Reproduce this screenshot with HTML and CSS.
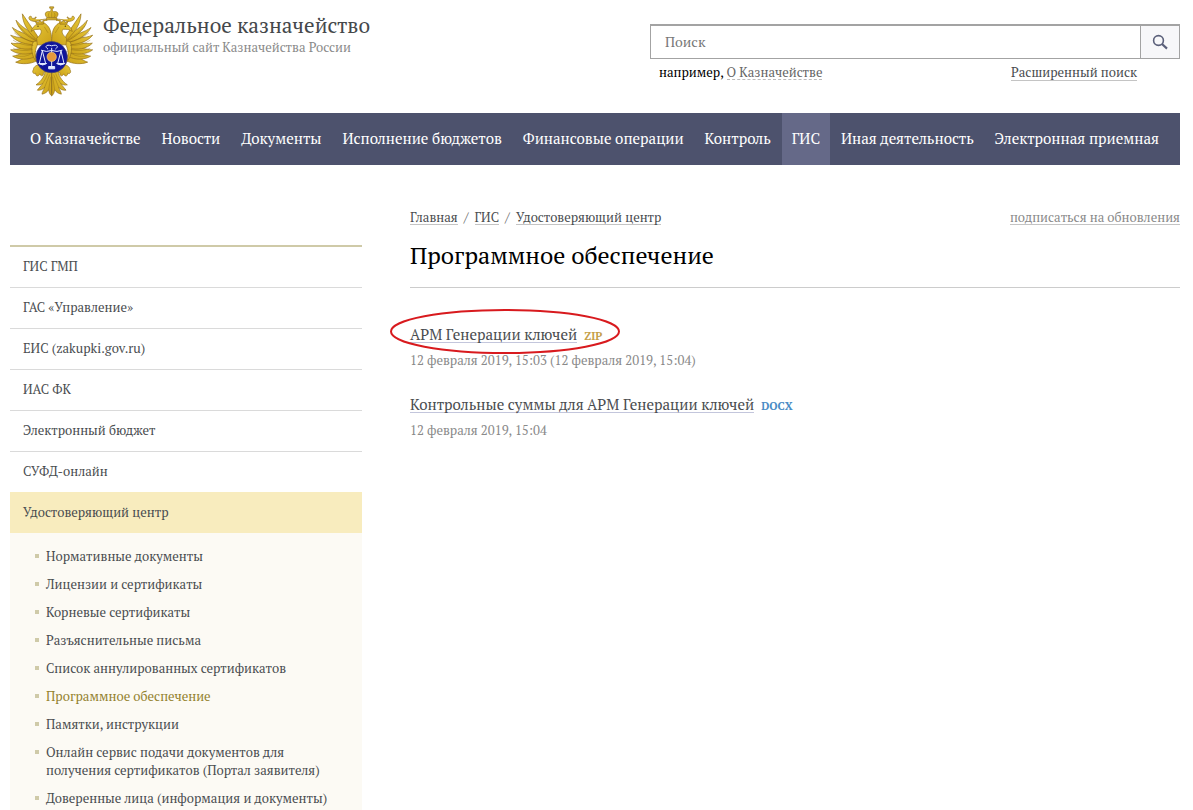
FILE: index.html
```html
<!DOCTYPE html>
<html lang="ru">
<head>
<meta charset="utf-8">
<meta name="viewport" content="width=device-width, initial-scale=1">
<title>Программное обеспечение — Федеральное казначейство</title>
<link rel="stylesheet" href="styles.css">
</head>
<body>
<div class="page">
  <header class="header">
    <div class="brand">
      <svg class="emblem" viewBox="30 18 252 272" aria-hidden="true">
        <defs>
          <linearGradient id="gold" x1="0" y1="0" x2="1" y2="1">
            <stop offset="0" stop-color="#e6c83a"/>
            <stop offset="1" stop-color="#cba016"/>
          </linearGradient>
          <g id="half" fill="url(#gold)" stroke="#94701a" stroke-width="2" stroke-linejoin="round">
            <path d="M110 182C92 192 65 193 47 186C64 180 78 170 93 152Z"/>
            <path d="M108 168C84 181 55 179 38 168C60 164 76 155 92 138Z"/>
            <path d="M106 155C82 166 49 163 32 149C55 149 72 141 92 126Z"/>
            <path d="M106 143C78 152 48 145 33 129C54 132 72 128 94 117Z"/>
            <path d="M108 134C80 134 48 126 32 105C58 115 74 113 98 111Z"/>
            <path d="M110 128C82 122 50 108 37 82C58 97 78 101 102 107Z"/>
            <path d="M112 124C84 110 56 91 48 60C66 82 84 90 106 104Z"/>
            <path d="M116 126C92 102 68 78 67 41C83 65 95 81 112 107Z"/>
            <path d="M119 122C107 142 101 157 110 186C96 170 91 144 100 124Z"/>
            <path d="M155 122C154 106 154 88 142 76C135 66 118 64 112 72C104 75 97 82 93 94C102 86 113 88 121 87C128 96 120 107 110 114L112 134H155Z"/>
            <path d="M110 72L106 64L115 67L119 60L124 66L132 64L130 72Z"/>
            <path d="M142 61C134 58 128 60 126 64M142 58C130 55 122 60 115 62C106 66 97 64 89 59C84 53 88 46 94 49C92 55 101 56 108 53C112 49 102 49 106 57"/>
            <path d="M123 195C112 192 100 199 100 209C95 216 101 223 107 219C106 229 117 230 119 221C123 231 132 227 130 218C138 216 138 206 131 204Z"/>
            <path d="M155 206H136C136 224 126 242 108 254C117 256 123 253 128 250C123 258 116 264 112 270C121 271 129 268 134 261C131 270 126 276 126 282C136 280 142 275 146 269C147 277 150 284 155 287Z"/>
          </g>
        </defs>
        <use href="#half"/>
        <use href="#half" transform="translate(310 0) scale(-1 1)"/>
        <path class="feather-lines" d="M56 77Q76 102 106 119M43 98Q69 119 102 126M39 120Q64 137 100 136M39 144Q66 156 98 148M47 166Q73 174 98 159M254 77Q234 102 204 119M267 98Q241 119 208 126M271 120Q246 137 210 136M271 144Q244 156 212 148M263 166Q237 174 212 159M133 80L144 98M177 80L166 98M143 220Q138 236 128 250M167 220Q172 236 182 250M149 223L134 261M161 223L176 261M152 230L146 269M158 230L164 269M155 220V280"/>
        <circle class="eye" cx="114" cy="78" r="2"/>
        <circle class="eye" cx="196" cy="78" r="2"/>
        <path class="crown" d="M142 53C130 42 137 31 150 35L153 30V24H149V20H161V24H157V30L160 35C173 31 180 42 168 53Z"/>
        <path class="crown" d="M139 53H171V59H139Z"/>
        <path class="feather-lines" d="M147 38Q142 45 148 52M155 34V52M163 38Q168 45 162 52"/>
        <circle class="shield" cx="155" cy="171" r="47"/>
        <g class="scales">
          <path d="M155 143V205M123 150Q139 157 155 151Q171 157 187 150M127 152L118 190M127 152L137 190M183 152L173 190M183 152L192 190M144 147C132 138 140 132 155 137C170 132 178 138 166 147"/>
          <path class="scale-fill" d="M116 190H140Q128 199 116 190ZM170 190H194Q182 199 170 190ZM146 199H164V206H146Z"/>
        </g>
        <circle class="coin" cx="155" cy="170" r="14"/>
      </svg>
      <div class="brand-text">
        <a class="brand-name" href="#">Федеральное казначейство</a>
        <span class="brand-note">официальный сайт Казначейства России</span>
      </div>
    </div>
    <form class="search">
      <div class="search-box">
        <input class="search-input" type="search" placeholder="Поиск" aria-label="Поиск">
        <button class="search-button" type="button" aria-label="Найти">
          <svg class="search-icon" viewBox="0 0 16 16" aria-hidden="true"><circle cx="6.5" cy="6.5" r="4.9"/><path class="handle" d="M10 10L15 14.6"/></svg>
        </button>
      </div>
      <div class="search-hints">
        <span>например, <a class="hint-link" href="#">О Казначействе</a></span>
        <a class="advanced-link" href="#">Расширенный поиск</a>
      </div>
    </form>
  </header>
  <nav class="nav" aria-label="Основное меню">
    <a href="#">О Казначействе</a>
    <a href="#">Новости</a>
    <a href="#">Документы</a>
    <a href="#">Исполнение бюджетов</a>
    <a href="#">Финансовые операции</a>
    <a href="#">Контроль</a>
    <a class="current" href="#">ГИС</a>
    <a href="#">Иная деятельность</a>
    <a href="#">Электронная приемная</a>
  </nav>
  <div class="columns">
    <aside class="sidebar">
      <ul class="menu">
        <li><a href="#">ГИС ГМП</a></li>
        <li><a href="#">ГАС «Управление»</a></li>
        <li><a href="#">ЕИС (zakupki.gov.ru)</a></li>
        <li><a href="#">ИАС ФК</a></li>
        <li><a href="#">Электронный бюджет</a></li>
        <li><a href="#">СУФД-онлайн</a></li>
        <li class="current"><a href="#">Удостоверяющий центр</a></li>
      </ul>
      <ul class="submenu">
        <li><a href="#">Нормативные документы</a></li>
        <li><a href="#">Лицензии и сертификаты</a></li>
        <li><a href="#">Корневые сертификаты</a></li>
        <li><a href="#">Разъяснительные письма</a></li>
        <li><a href="#">Список аннулированных сертификатов</a></li>
        <li><a class="current" href="#">Программное обеспечение</a></li>
        <li><a href="#">Памятки, инструкции</a></li>
        <li><a href="#">Онлайн сервис подачи документов для получения сертификатов (Портал заявителя)</a></li>
        <li><a href="#">Доверенные лица (информация и документы)</a></li>
      </ul>
    </aside>
    <main class="content">
      <div class="topline">
        <nav class="crumbs" aria-label="Навигация">
          <a href="#">Главная</a><span>/</span><a href="#">ГИС</a><span>/</span><a href="#">Удостоверяющий центр</a>
        </nav>
        <a class="subscribe" href="#">подписаться на обновления</a>
      </div>
      <h1>Программное обеспечение</h1>
      <ul class="files">
        <li>
          <div class="file-title">
            <a href="#">АРМ Генерации ключей</a><span class="type zip">ZIP</span>
            <svg class="marker" viewBox="0 0 230 45" aria-hidden="true"><ellipse cx="115" cy="22.5" rx="114" ry="21.5"/></svg>
          </div>
          <p class="date">12 февраля 2019, 15:03 (12 февраля 2019, 15:04)</p>
        </li>
        <li>
          <div class="file-title">
            <a href="#">Контрольные суммы для АРМ Генерации ключей</a><span class="type docx">DOCX</span>
          </div>
          <p class="date">12 февраля 2019, 15:04</p>
        </li>
      </ul>
    </main>
  </div>
</div>
</body>
</html>
```
FILE: styles.css
```css
* { box-sizing: border-box; }
body {
  margin: 0;
  background: #fff;
  color: #000;
  font: 13px/18px "PT Serif", "Liberation Serif", serif;
}
a { color: #4a4d50; text-decoration: none; }
ul { list-style: none; margin: 0; padding: 0; }
.page { padding: 0 13px 0 10px; }

.header {
  display: flex;
  justify-content: space-between;
  height: 113px;
}
.brand { display: flex; gap: 9px; padding-top: 6px; }
.emblem { width: 84px; height: 91px; }
.crown { fill: url(#gold); stroke: #94701a; stroke-width: 2; }
.feather-lines { fill: none; stroke: #80600c; stroke-width: 2; opacity: .5; }
.eye { fill: #3e2e0a; }
.shield { fill: #10159a; stroke: #4a4668; stroke-width: 2; }
.scales { fill: none; stroke: #e1e9ff; stroke-width: 3; }
.scale-fill { fill: #e1e9ff; }
.coin { fill: #e59a3c; stroke: #f7cf87; stroke-width: 2; }
.brand-text { display: flex; flex-direction: column; padding-top: 6px; }
.brand-name { font-size: 21px; line-height: 26px; color: #45484b; }
.brand-note { color: #8a8a8a; }

.search { width: 530px; padding-top: 24px; }
.search-box { display: flex; height: 35px; border: 1px solid #a3a3a3; border-top-width: 2px; }
.search-input {
  flex: 1;
  min-width: 0;
  padding: 0 14px 2px;
  border: 0;
  outline: 0;
  background: #fff;
  font: 14px "PT Serif", "Liberation Serif", serif;
}
.search-input::placeholder { color: #777; opacity: 1; }
.search-button {
  display: flex;
  align-items: center;
  justify-content: center;
  width: 39px;
  padding: 0;
  border: 0;
  border-left: 1px solid #a3a3a3;
  background: #f7f7f9;
}
.search-icon { width: 16px; height: 16px; fill: none; stroke: #5b607a; stroke-width: 1.6; }
.handle { stroke-width: 2.2; }
.search-hints {
  display: flex;
  justify-content: space-between;
  padding: 4px 43px 0 9px;
}
.hint-link { display: inline-block; height: 17px; color: #666; border-bottom: 1px dashed #bbb; }
.advanced-link { height: 18px; border-bottom: 1px solid #c4c4c4; }

.nav {
  display: flex;
  justify-content: space-between;
  height: 52px;
  padding: 0 11px 0 10px;
  background: #4d526d;
}
.nav a {
  display: flex;
  align-items: center;
  padding: 0 10px 2px;
  color: #fff;
  font-size: 15px;
  white-space: nowrap;
}
.nav .current { background: #656988; }

.columns {
  display: grid;
  grid-template-columns: 352px 1fr;
  gap: 48px;
}
.sidebar { padding-top: 80px; }
.menu { border-top: 2px solid #cfcaa8; }
.menu li { border-bottom: 1px solid #dadada; }
.menu a { display: block; padding: 10px 13px 12px; }
.menu .current {
  margin-top: -1px;
  border-top: 1px solid #f8ecbe;
  border-bottom: 0;
  background: #f8ecbe;
}
.submenu {
  display: grid;
  gap: 10px;
  padding: 14px 20px 3px 25px;
  background: #fcfaf4;
}
.submenu li { display: flex; gap: 7px; }
.submenu li::before {
  content: "";
  flex: none;
  width: 4px;
  height: 4px;
  margin-top: 7px;
  background: #cfcaa8;
}
.submenu .current { color: #94822f; }

.content { padding-top: 43px; }
.topline { display: flex; justify-content: space-between; }
.crumbs { display: flex; gap: 6px; color: #666; }
.crumbs span { font-size: 14px; }
.crumbs a, .subscribe { height: 17px; border-bottom: 1px solid #c4c4c4; }
.subscribe { color: #8a8a8a; }
h1 {
  margin: 14px 0 0;
  padding-bottom: 16px;
  border-bottom: 1px solid #ccc;
  font-size: 24px;
  line-height: 31px;
  font-weight: 400;
}
.files { display: grid; gap: 25px; padding-top: 37px; }
.file-title { position: relative; display: flex; gap: 7px; }
.file-title a { height: 18px; font-size: 15px; border-bottom: 1px solid #c3c6dc; }
.type { font-size: 11px; font-weight: 700; line-height: 22px; }
.zip { color: #c5a04a; }
.docx { color: #4a8cc5; }
.date { margin: 3px 0 0; line-height: 20px; color: #8a8a8a; }
.marker {
  position: absolute;
  left: -20px;
  top: -16px;
  width: 230px;
  height: 45px;
  fill: none;
  stroke: #d81a1e;
  stroke-width: 2;
}
```
